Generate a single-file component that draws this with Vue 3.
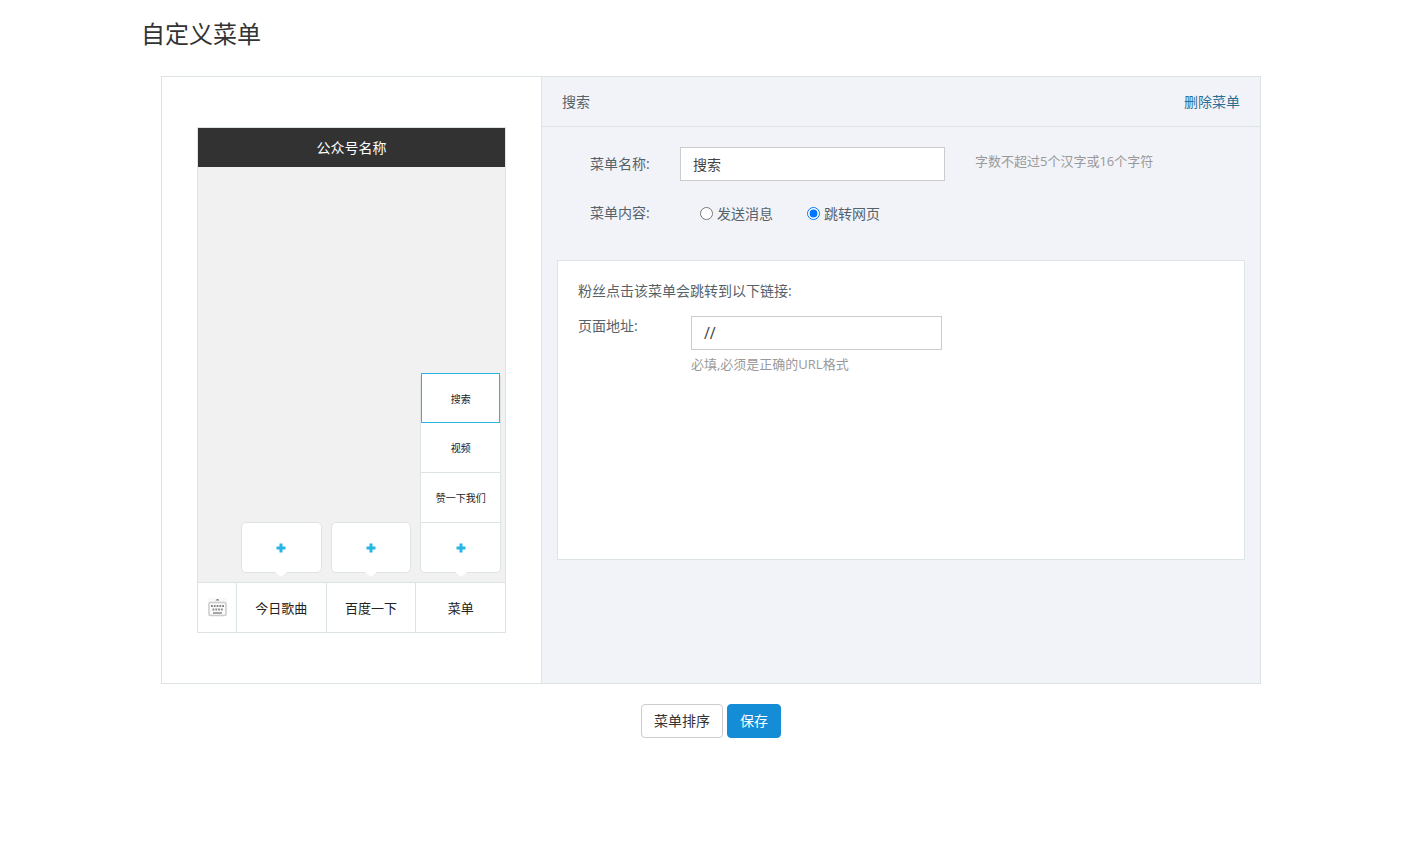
<script setup>
import { ref } from 'vue'

const menus = [
  { name: '今日歌曲', items: [] },
  { name: '百度一下', items: [] },
  { name: '菜单', items: ['搜索', '视频', '赞一下我们'] },
]
const selected = ref('搜索')
const menuName = ref('搜索')
const mode = ref('link')
const url = ref('//')
</script>

<template>
  <main class="page">
    <h1>自定义菜单</h1>
    <div class="editor">
      <section class="preview">
        <div class="phone">
          <div class="phone-title">公众号名称</div>
          <div class="phone-body">
            <div v-for="menu in menus" :key="menu.name" class="popup" :class="{ stacked: menu.items.length }">
              <button
                v-for="item in menu.items"
                :key="item"
                type="button"
                class="sub"
                :class="{ active: item === selected }"
                @click="selected = item"
              >{{ item }}</button>
              <button type="button" class="add" aria-label="+">
                <svg width="10" height="10" viewBox="0 0 10 10"><path d="M3.5 0.500h3v3h3v3h-3v3h-3v-3h-3v-3h3z" fill="#27b6e3" /></svg>
              </button>
              <svg class="arrow" width="12" height="5" viewBox="0 0 12 5"><path d="M0 0h12L7 4H5z" fill="#fff" /></svg>
            </div>
          </div>
          <div class="phone-bar">
            <div class="keyboard">
              <svg width="19" height="19" viewBox="0 0 19 19">
                <rect width="19" height="18" fill="#f8f8f8" />
                <path d="M7.500 2.500h4L10 1H9z" fill="#777" />
                <rect x="1" y="4.500" width="17" height="13" rx="1.500" fill="#fafafa" stroke="#ccc" stroke-width="1.500" />
                <path d="M3 8h13" stroke="#888" stroke-width="2" stroke-dasharray="1.800 1" />
                <path d="M4.500 11.500h10.500" stroke="#888" stroke-width="2" stroke-dasharray="1.800 1" />
                <path d="M5 15h9" stroke="#888" stroke-width="1.500" />
              </svg>
            </div>
            <button v-for="menu in menus" :key="menu.name" type="button" class="tab">{{ menu.name }}</button>
          </div>
        </div>
      </section>

      <section class="detail">
        <header class="detail-head">
          <span>搜索</span>
          <a href="#">删除菜单</a>
        </header>
        <div class="row">
          <label class="caption" for="menu-name">菜单名称:</label>
          <input id="menu-name" v-model="menuName" class="field name-field" type="text" />
          <span class="hint">字数不超过5个汉字或16个字符</span>
        </div>
        <div class="row" role="radiogroup" aria-labelledby="content-caption">
          <span id="content-caption" class="caption">菜单内容:</span>
          <div class="choices">
            <label class="choice"><input v-model="mode" type="radio" name="mode" value="message" /><span>发送消息</span></label>
            <label class="choice"><input v-model="mode" type="radio" name="mode" value="link" /><span>跳转网页</span></label>
          </div>
        </div>
        <div class="panel">
          <p>粉丝点击该菜单会跳转到以下链接:</p>
          <div class="url-row">
            <label for="page-url">页面地址:</label>
            <div class="url-cell">
              <input id="page-url" v-model="url" class="field url-field" type="text" />
              <span class="note">必填,必须是正确的URL格式</span>
            </div>
          </div>
        </div>
      </section>
    </div>
    <div class="actions">
      <button type="button" class="btn">菜单排序</button>
      <button type="button" class="btn primary">保存</button>
    </div>
  </main>
</template>

<style>
body {
  background: #fff;
}
</style>

<style scoped>
.page,
.page * {
  box-sizing: border-box;
}
.page {
  max-width: 1140px;
  margin: 0 auto;
  padding-top: 20px;
  font: 14px/20px "Open Sans", "Noto Sans CJK SC", sans-serif;
  color: #56626a;
}
button,
input {
  font-family: inherit;
}
button {
  cursor: pointer;
}
h1 {
  margin: 0 0 28px;
  font-size: 24px;
  line-height: 28px;
  font-weight: 400;
  color: #333;
}
.editor {
  display: flex;
  margin: 0 20px;
  min-height: 608px;
  border: 1px solid #dde4e6;
}
.preview {
  flex: 0 0 379px;
  padding: 50px 35px;
}
.phone {
  display: flex;
  flex-direction: column;
  height: 100%;
  border: 1px solid #dde4e6;
  background: #f1f1f1;
}
.phone-title {
  height: 39px;
  line-height: 40px;
  text-align: center;
  color: #fff;
  background: #323232;
}
.phone-body {
  flex: 1;
  display: flex;
  align-items: flex-end;
  gap: 9px;
  padding: 0 4px 9px 43px;
}
.popup {
  position: relative;
  flex: 1 1 0;
  display: flex;
  flex-direction: column;
  border: 1px solid #dde4e6;
  border-radius: 5px;
  background: #fff;
}
.popup.stacked {
  border-top: 0;
}
.sub {
  height: 50px;
  padding: 0;
  border: 0;
  border-bottom: 1px solid #dde4e6;
  background: #fff;
  font-size: 10px;
  color: #222;
}
.sub.active {
  border: 1px solid #27b6e3;
}
.add {
  display: flex;
  align-items: center;
  justify-content: center;
  height: 49px;
  padding: 1px 0 0;
  border: 0;
  border-radius: 5px;
  background: #fff;
}
.arrow {
  position: absolute;
  left: 50%;
  top: 100%;
  margin-left: -6px;
}
.phone-bar {
  display: flex;
  height: 50px;
  border-top: 1px solid #dde4e6;
  background: #fff;
}
.keyboard {
  flex: 0 0 38px;
  display: flex;
  align-items: center;
  justify-content: center;
}
.tab {
  flex: 1 1 0;
  padding: 0;
  border: 0;
  border-left: 1px solid #dde4e6;
  background: #fff;
  font-size: 13px;
  color: #222;
}
.detail {
  flex: 1;
  border-left: 1px solid #dde4e6;
  background: #f2f3f8;
}
.detail-head {
  display: flex;
  justify-content: space-between;
  align-items: center;
  height: 50px;
  margin-bottom: 20px;
  padding: 0 20px;
  border-bottom: 1px solid #dde4e6;
}
.detail-head a {
  color: #2a6f97;
  text-decoration: none;
}
.row {
  display: flex;
  padding-left: 48px;
  margin-bottom: 15px;
  min-height: 34px;
}
.caption {
  flex: 0 0 90px;
  line-height: 34px;
}
.field {
  width: 100%;
  height: 34px;
  padding: 0 12px;
  border: 1px solid #ccc;
  background: #fff;
  font-size: 14px;
  color: #444;
}
.name-field {
  flex: 0 1 265px;
}
.url-field {
  font-size: 16px;
}
.hint {
  margin-left: 30px;
  line-height: 28px;
  font-size: 13px;
  color: #999;
}
.choices {
  display: flex;
  gap: 34px;
  padding-left: 20px;
}
.choice {
  display: flex;
  align-items: center;
  gap: 4px;
}
.choice span {
  padding-top: 2px;
}
.choice input {
  width: 13px;
  height: 13px;
  margin: 0;
}
.panel {
  min-height: 300px;
  margin: 30px 15px 0;
  padding: 20px;
  border: 1px solid #dde4e6;
  background: #fff;
}
.panel p {
  margin: 0 0 15px;
}
.url-row {
  display: flex;
}
.url-row label {
  flex: 0 0 113px;
}
.url-cell {
  display: flex;
  flex-direction: column;
  flex: 0 1 251px;
}
.note {
  margin-top: 4px;
  font-size: 13px;
  color: #999;
}
.actions {
  display: flex;
  justify-content: center;
  gap: 4px;
  margin-top: 20px;
}
.btn {
  height: 34px;
  padding: 0 12px 2px;
  border: 1px solid #ccc;
  border-radius: 4px;
  background: #fff;
  font-size: 14px;
  color: #333;
}
.btn.primary {
  border-color: #148cd6;
  background: #148cd6;
  color: #fff;
}
</style>
